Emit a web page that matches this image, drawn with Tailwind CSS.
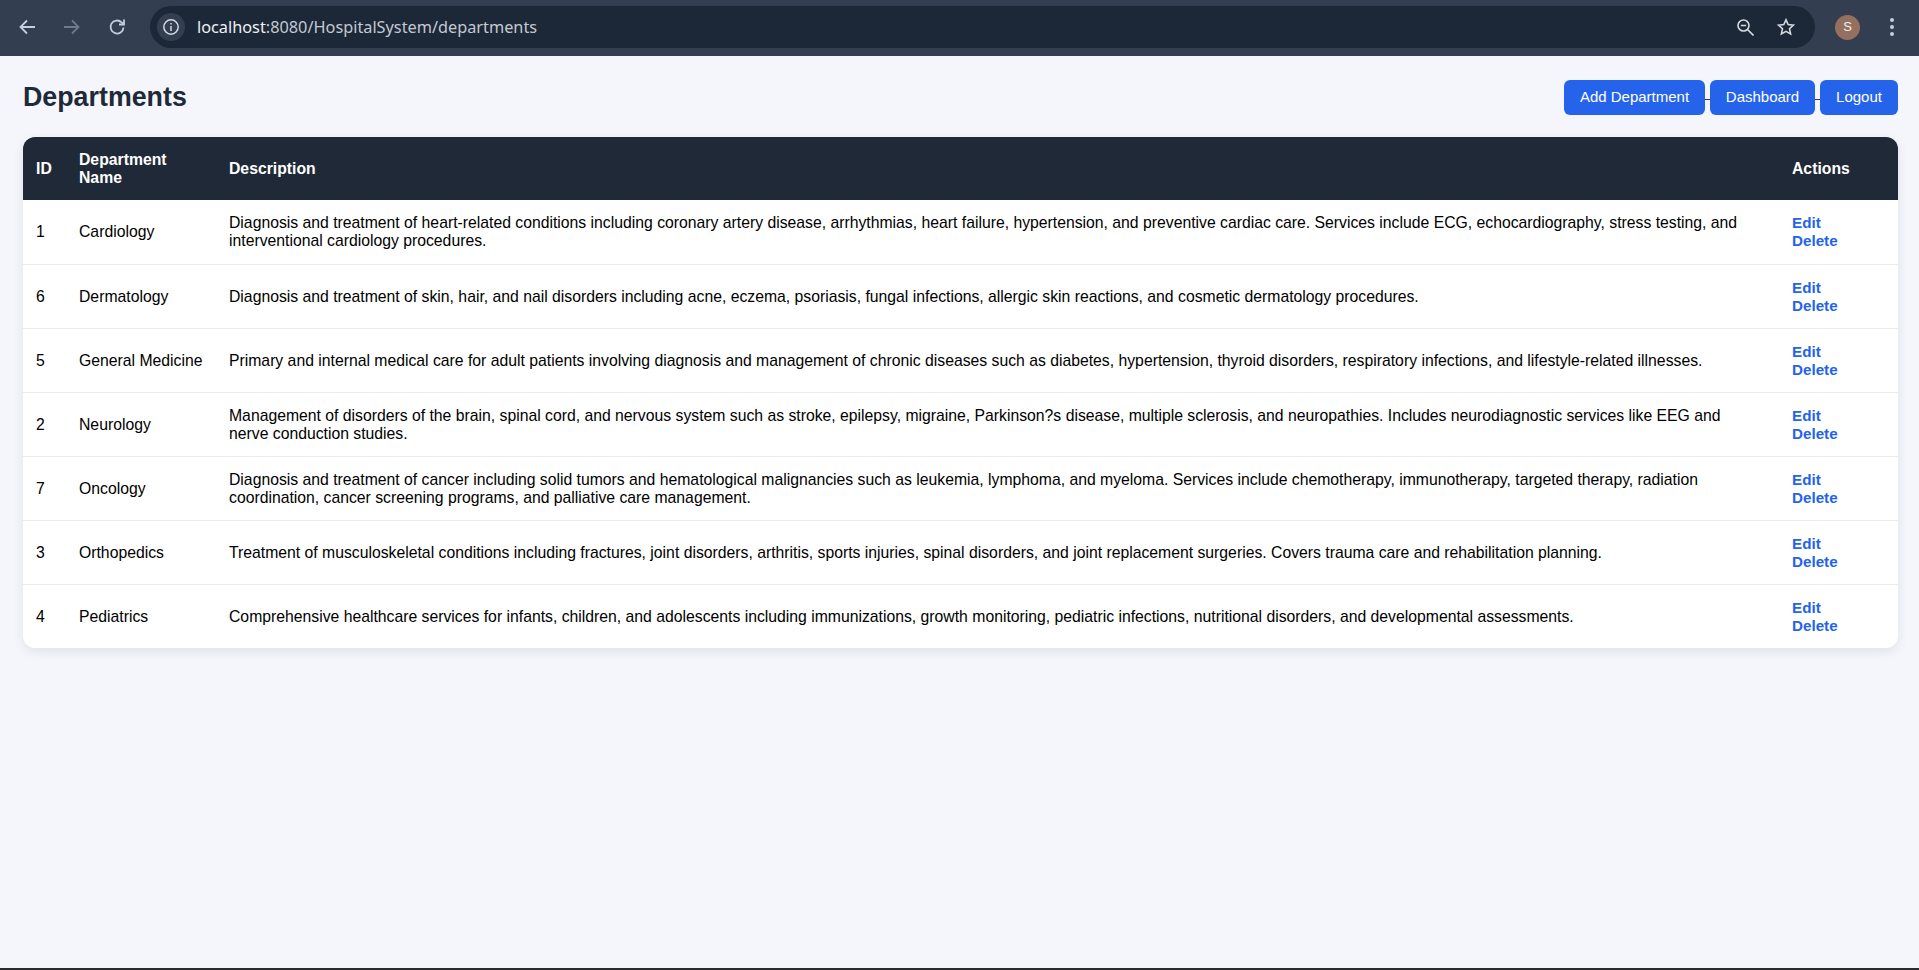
<!DOCTYPE html>
<html lang="en">
<head>
  <meta charset="UTF-8">
  <title>Departments</title>
  <script src="https://cdn.jsdelivr.net/npm/@tailwindcss/browser@4"></script>
</head>
<body class="bg-[#f4f6fb] h-[970px] overflow-hidden flex flex-col font-['Liberation_Sans',Arial,sans-serif]">

  <!-- Browser toolbar -->
  <div class="h-[56px] shrink-0 bg-[#333f50] flex items-center pb-[2px]">
    <div class="w-[150px] shrink-0 flex items-center pl-[15px] gap-[21px]">
      <svg class="w-[24px] h-[24px]" viewBox="0 0 24 24" fill="none" stroke="#c5cfdb" stroke-width="1.8"><path d="M20 12H5.500M12 5.500L5.500 12l6.500 6.500"/></svg>
      <svg class="w-[24px] h-[24px]" viewBox="0 0 24 24" fill="none" stroke="#6f7a88" stroke-width="1.800"><path d="M4 12h14.500M12 5.500l6.500 6.500-6.500 6.500"/></svg>
      <svg class="w-[24px] h-[24px]" viewBox="0 0 24 24" fill="none" stroke="#c5cfdb" stroke-width="1.800"><path d="M18.500 12.500a6.500 6.500 0 1 1-1.900-5.100L19 9.500"/><path d="M19 4.500v5h-5"/></svg>
    </div>
    <div class="w-[1665px] h-[42px] rounded-full bg-[#1c2838] flex items-center pl-[7px] pr-[20px]">
      <div class="w-[28px] h-[28px] rounded-full bg-[#333f50] flex items-center justify-center">
        <svg class="w-[18px] h-[18px]" viewBox="0 0 18 18" fill="none" stroke="#d5d9df" stroke-width="1.5"><circle cx="9" cy="9" r="7.200"/><path d="M9 8v5M9 5v1.600"/></svg>
      </div>
      <div class="ml-[12px] text-[16.3px] font-['Noto_Sans',sans-serif] text-[#c4c9d1]"><span class="text-[#eef0f3]">localhost</span>:8080/HospitalSystem/departments</div>
      <div class="ml-auto flex items-center gap-[23px]">
        <svg class="w-[17px] h-[17px] mt-[1px]" viewBox="0 0 17 17" fill="none" stroke="#d5d9df" stroke-width="1.600"><circle cx="6.500" cy="6.500" r="5.500"/><path d="M3.800 6.500h5.400M10.500 10.500l6 6"/></svg>
        <svg class="w-[18px] h-[18px]" viewBox="0 0 18 18" fill="none" stroke="#d5d9df" stroke-width="1.600"><path d="M9 1.800l2.200 4.800 5.200.6-3.900 3.500 1.100 5.200L9 13.300l-4.600 2.600 1.100-5.200-3.900-3.500 5.200-.6z"/></svg>
      </div>
    </div>
    <div class="ml-[20px] w-[25px] h-[25px] rounded-full bg-[#96705f] text-[#f3eeeb] text-[13px] flex items-center justify-center">S</div>
    <div class="ml-[30px] flex flex-col gap-[3px]">
      <span class="w-[4px] h-[4px] rounded-full bg-[#c5cfdb]"></span>
      <span class="w-[4px] h-[4px] rounded-full bg-[#c5cfdb]"></span>
      <span class="w-[4px] h-[4px] rounded-full bg-[#c5cfdb]"></span>
    </div>
  </div>

  <!-- Page -->
  <div class="flex-1 pt-[24px] pl-[23px] pr-[21px]">
    <div class="flex items-center justify-between h-[35px] mb-[22px]">
      <h1 class="text-[26.8px] font-bold text-[#1f2937]">Departments</h1>
      <div class="flex items-center text-[15px] text-white">
        <a class="h-[35px] w-[141px] flex items-center justify-center bg-[#2563eb] rounded-[6px]">Add Department</a>
        <span class="w-[5px] h-px bg-[#551a8b] mt-[4px]"></span>
        <a class="h-[35px] w-[105px] flex items-center justify-center bg-[#2563eb] rounded-[6px]">Dashboard</a>
        <span class="w-[5px] h-px bg-[#551a8b] mt-[4px]"></span>
        <a class="h-[35px] w-[78px] flex items-center justify-center bg-[#2563eb] rounded-[6px]">Logout</a>
      </div>
    </div>

    <div class="bg-white rounded-[12px] overflow-hidden shadow-[0_4px_12px_rgba(0,0,0,0.08)]">
      <table class="w-full border-collapse text-[15.76px] text-black leading-[18px]">
        <thead class="bg-[#1f2937] text-white font-bold text-left">
          <tr class="h-[63px]">
            <th class="px-[13px] w-[43px]">ID</th>
            <th class="px-[13px] w-[150px]">Department Name</th>
            <th class="px-[13px]">Description</th>
            <th class="px-[13px] w-[119px]">Actions</th>
          </tr>
        </thead>
        <tbody class="[&_td]:pt-[1px]">
          <tr class="h-[64px] border-b border-[#e9ebee]">
            <td class="px-[13px]">1</td><td class="px-[13px]">Cardiology</td>
            <td class="pl-[13px] pr-[18px]">Diagnosis and treatment of heart-related conditions including coronary artery disease, arrhythmias, heart failure, hypertension, and preventive cardiac care. Services include ECG, echocardiography, stress testing, and interventional cardiology procedures.</td>
            <td class="px-[13px] font-bold text-[15.2px] text-[#2563eb]"><a class="block">Edit</a><a class="block">Delete</a></td>
          </tr>
          <tr class="h-[64px] border-b border-[#e9ebee]">
            <td class="px-[13px]">6</td><td class="px-[13px]">Dermatology</td>
            <td class="pl-[13px] pr-[18px]">Diagnosis and treatment of skin, hair, and nail disorders including acne, eczema, psoriasis, fungal infections, allergic skin reactions, and cosmetic dermatology procedures.</td>
            <td class="px-[13px] font-bold text-[15.2px] text-[#2563eb]"><a class="block">Edit</a><a class="block">Delete</a></td>
          </tr>
          <tr class="h-[64px] border-b border-[#e9ebee]">
            <td class="px-[13px]">5</td><td class="px-[13px]">General Medicine</td>
            <td class="pl-[13px] pr-[18px]">Primary and internal medical care for adult patients involving diagnosis and management of chronic diseases such as diabetes, hypertension, thyroid disorders, respiratory infections, and lifestyle-related illnesses.</td>
            <td class="px-[13px] font-bold text-[15.2px] text-[#2563eb]"><a class="block">Edit</a><a class="block">Delete</a></td>
          </tr>
          <tr class="h-[64px] border-b border-[#e9ebee]">
            <td class="px-[13px]">2</td><td class="px-[13px]">Neurology</td>
            <td class="pl-[13px] pr-[18px]">Management of disorders of the brain, spinal cord, and nervous system such as stroke, epilepsy, migraine, Parkinson?s disease, multiple sclerosis, and neuropathies. Includes neurodiagnostic services like EEG and nerve conduction studies.</td>
            <td class="px-[13px] font-bold text-[15.2px] text-[#2563eb]"><a class="block">Edit</a><a class="block">Delete</a></td>
          </tr>
          <tr class="h-[64px] border-b border-[#e9ebee]">
            <td class="px-[13px]">7</td><td class="px-[13px]">Oncology</td>
            <td class="pl-[13px] pr-[18px]">Diagnosis and treatment of cancer including solid tumors and hematological malignancies such as leukemia, lymphoma, and myeloma. Services include chemotherapy, immunotherapy, targeted therapy, radiation coordination, cancer screening programs, and palliative care management.</td>
            <td class="px-[13px] font-bold text-[15.2px] text-[#2563eb]"><a class="block">Edit</a><a class="block">Delete</a></td>
          </tr>
          <tr class="h-[64px] border-b border-[#e9ebee]">
            <td class="px-[13px]">3</td><td class="px-[13px]">Orthopedics</td>
            <td class="pl-[13px] pr-[18px]">Treatment of musculoskeletal conditions including fractures, joint disorders, arthritis, sports injuries, spinal disorders, and joint replacement surgeries. Covers trauma care and rehabilitation planning.</td>
            <td class="px-[13px] font-bold text-[15.2px] text-[#2563eb]"><a class="block">Edit</a><a class="block">Delete</a></td>
          </tr>
          <tr class="h-[64px]">
            <td class="px-[13px]">4</td><td class="px-[13px]">Pediatrics</td>
            <td class="pl-[13px] pr-[18px]">Comprehensive healthcare services for infants, children, and adolescents including immunizations, growth monitoring, pediatric infections, nutritional disorders, and developmental assessments.</td>
            <td class="px-[13px] font-bold text-[15.2px] text-[#2563eb]"><a class="block">Edit</a><a class="block">Delete</a></td>
          </tr>
        </tbody>
      </table>
    </div>
  </div>

  <div class="h-[2px] shrink-0 bg-[#2b2b2b]"></div>
</body>
</html>
